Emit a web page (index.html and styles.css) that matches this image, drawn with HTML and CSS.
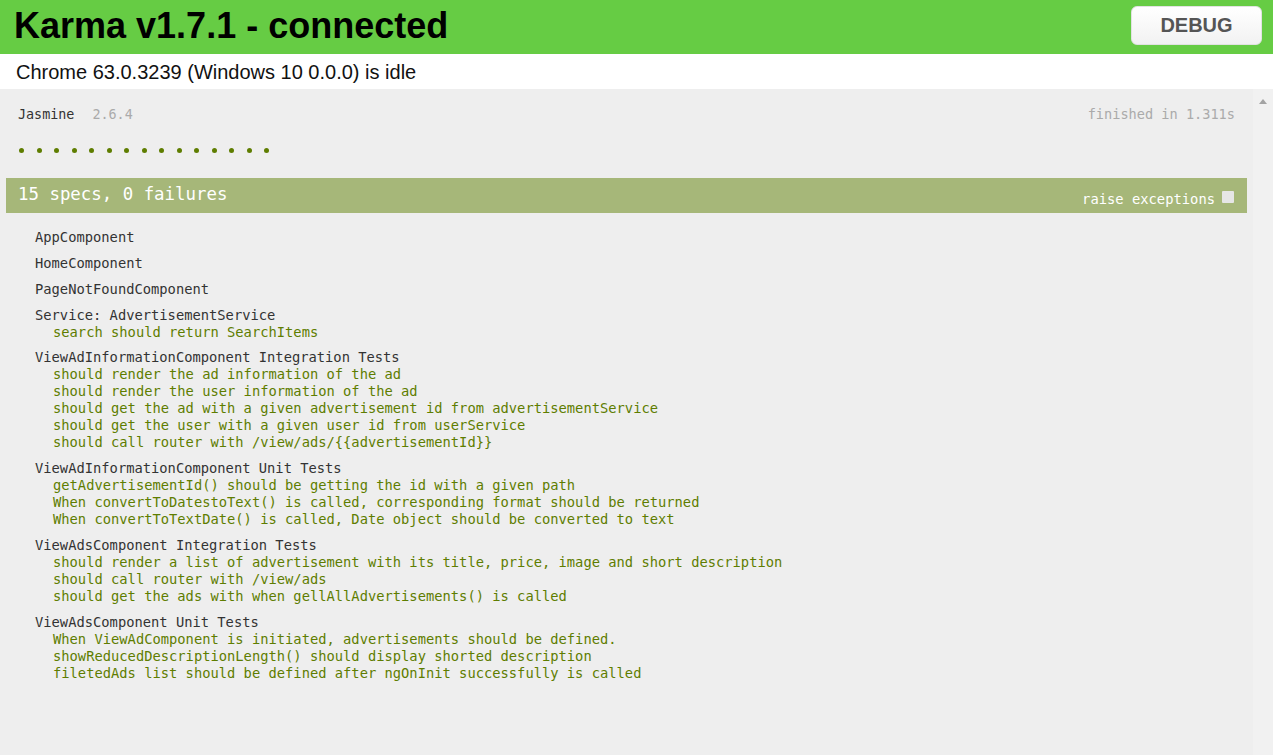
FILE: index.html
```
<!DOCTYPE html>
<html>
<head>
<meta charset="utf-8">
<title>Karma</title>
<link rel="stylesheet" href="styles.css">
</head>
<body>
<div class="banner">
  <h1 class="title">Karma v1.7.1 - connected</h1>
  <a class="btn-debug" href="#">DEBUG</a>
</div>
<ul class="browsers"><li>Chrome 63.0.3239 (Windows 10 0.0.0) is idle</li></ul>
<div class="context">
  <div class="reporter">
    <div class="jas-header">
      <div class="jas-brand"><span class="jas-title">Jasmine</span><span class="jas-version">2.6.4</span></div>
      <span class="jas-duration">finished in 1.311s</span>
    </div>
    <ul class="symbols">
      <li></li><li></li><li></li><li></li><li></li><li></li><li></li><li></li><li></li><li></li><li></li><li></li><li></li><li></li><li></li>
    </ul>
    <div class="bar">
      <span class="bar-text">15 specs, 0 failures</span>
      <span class="raise">raise exceptions<span class="checkbox"></span></span>
    </div>
    <div class="summary">
      <ul class="suite"><li class="suite-name">AppComponent</li></ul>
      <ul class="suite"><li class="suite-name">HomeComponent</li></ul>
      <ul class="suite"><li class="suite-name">PageNotFoundComponent</li></ul>
      <ul class="suite"><li class="suite-name">Service: AdvertisementService</li>
        <li><ul class="specs"><li>search should return SearchItems</li></ul></li></ul>
      <ul class="suite"><li class="suite-name">ViewAdInformationComponent Integration Tests</li>
        <li><ul class="specs">
          <li>should render the ad information of the ad</li>
          <li>should render the user information of the ad</li>
          <li>should get the ad with a given advertisement id from advertisementService</li>
          <li>should get the user with a given user id from userService</li>
          <li>should call router with /view/ads/{{advertisementId}}</li>
        </ul></li></ul>
      <ul class="suite"><li class="suite-name">ViewAdInformationComponent Unit Tests</li>
        <li><ul class="specs">
          <li>getAdvertisementId() should be getting the id with a given path</li>
          <li>When convertToDatestoText() is called, corresponding format should be returned</li>
          <li>When convertToTextDate() is called, Date object should be converted to text</li>
        </ul></li></ul>
      <ul class="suite"><li class="suite-name">ViewAdsComponent Integration Tests</li>
        <li><ul class="specs">
          <li>should render a list of advertisement with its title, price, image and short description</li>
          <li>should call router with /view/ads</li>
          <li>should get the ads with when gellAllAdvertisements() is called</li>
        </ul></li></ul>
      <ul class="suite"><li class="suite-name">ViewAdsComponent Unit Tests</li>
        <li><ul class="specs">
          <li>When ViewAdComponent is initiated, advertisements should be defined.</li>
          <li>showReducedDescriptionLength() should display shorted description</li>
          <li>filetedAds list should be defined after ngOnInit successfully is called</li>
        </ul></li></ul>
    </div>
  </div>
  <div class="scrollbar"><span class="arrow-up"></span></div>
</div>
</body>
</html>
```
FILE: styles.css
```
html, body {
  margin: 0;
  padding: 0;
  height: 100%;
  overflow: hidden;
  font-family: "Liberation Sans", Arial, sans-serif;
}
ul { list-style: none; margin: 0; padding: 0; }

.banner {
  background: #66cc44;
  height: 54px;
  display: flex;
  align-items: flex-start;
  justify-content: space-between;
  padding: 0 11px 0 14px;
  box-sizing: border-box;
}
.title {
  margin: 0;
  font-size: 36px;
  line-height: 52px;
  font-weight: bold;
  color: #000;
}
.btn-debug {
  margin-top: 6px;
  width: 131px;
  height: 39px;
  box-sizing: border-box;
  display: flex;
  align-items: center;
  justify-content: center;
  background: linear-gradient(#ffffff, #f2f2f2);
  border: 1px solid #e2e2e2;
  border-radius: 6px;
  color: #555;
  font-weight: bold;
  font-size: 20px;
  text-decoration: none;
}

.browsers {
  background: #fff;
  height: 35px;
  padding: 0 16px;
  font-size: 20px;
  line-height: 36px;
  color: #111;
}

.context {
  display: flex;
  height: 666px;
  overflow: hidden;
}
.reporter {
  flex: 1;
  background: #eee;
  padding: 17px 6px 0 6px;
  font-family: "DejaVu Sans Mono", monospace;
  font-size: 13.77px;
  line-height: 17px;
  color: #333;
}
.scrollbar {
  width: 20px;
  background: #f1f1f1;
  position: relative;
}
.arrow-up {
  position: absolute;
  left: 6px;
  top: 10px;
  width: 0;
  height: 0;
  border-left: 4px solid transparent;
  border-right: 4px solid transparent;
  border-bottom: 5px solid #a3a3a3;
}

.jas-header {
  display: flex;
  justify-content: space-between;
  padding: 0 12px 0 12px;
  height: 17px;
}
.jas-title { font-size: 13.4px; color: #333; }
.jas-version { margin-left: 18px; color: #aaa; font-size: 13.4px; }
.jas-duration { color: #aaa; font-size: 13.6px; }

.symbols {
  display: flex;
  margin: 19px 0 0 8px;
  height: 17px;
  align-items: center;
}
.symbols li {
  width: 17.5px;
  height: 17px;
  position: relative;
}
.symbols li::before {
  content: "";
  position: absolute;
  left: 5px;
  top: 6px;
  width: 5px;
  height: 5px;
  border-radius: 50%;
  background: #5e7d00;
}

.bar {
  margin-top: 19px;
  height: 35px;
  background: #a6b779;
  color: #fff;
  display: flex;
  justify-content: space-between;
  padding: 0 13px 0 12px;
}
.bar-text {
  font-size: 17.4px;
  line-height: 32px;
}
.raise {
  align-self: flex-end;
  font-size: 13.8px;
  line-height: 17px;
  margin-bottom: 5px;
  display: flex;
  align-items: center;
}
.checkbox {
  display: inline-block;
  width: 12px;
  height: 12px;
  margin-left: 7px;
  margin-bottom: 5px;
  background: #e6e6e6;
  border-radius: 1px;
}

.summary {
  padding: 7px 0 0 29px;
}
.suite {
  margin: 8.9px 0;
}
.suite-name { color: #333; }
.specs {
  padding-left: 18px;
  color: #5e7d00;
}
```
